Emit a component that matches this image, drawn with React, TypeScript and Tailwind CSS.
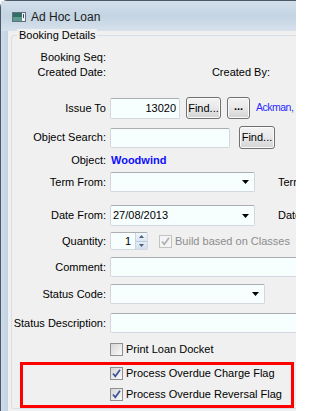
import type { ReactNode } from 'react';

function Check({ disabled = false, checked = true }: { disabled?: boolean; checked?: boolean }) {
  return (
    <span
      className={
        disabled
          ? 'w-[13px] h-[13px] shrink-0 border border-[#c3c3c3] bg-[#f4f4f4] flex items-center justify-center'
          : 'w-[13px] h-[13px] shrink-0 border border-[#8e8f8f] bg-gradient-to-br from-[#d6d6d6] to-[#fafafa] flex items-center justify-center'
      }
    >
      {checked && (
        <svg width="11" height="11" viewBox="0 0 11 11">
          <path
            d="M2 5.5 L4.3 8.3 L9 1.8"
            fill="none"
            stroke={disabled ? '#b0b0b0' : '#3d5196'}
            strokeWidth="1.7"
          />
        </svg>
      )}
    </span>
  );
}

function Row({
  label,
  className,
  children,
}: {
  label: string;
  className: string;
  children?: ReactNode;
}) {
  return (
    <div className={`flex items-center shrink-0 ${className}`}>
      <div className="w-[94px] shrink-0 text-right whitespace-nowrap">{label}</div>
      <div className="ml-[4px] flex items-center whitespace-nowrap">{children}</div>
    </div>
  );
}

function TextBox({ className, children }: { className: string; children?: ReactNode }) {
  return (
    <div
      className={`shrink-0 border border-[#d3d8de] border-t-[#abadb3] rounded-[2px] bg-[#f6fefe] flex items-center px-[3px] ${className}`}
    >
      {children}
    </div>
  );
}

function Combo({ className, value }: { className: string; value?: string }) {
  return (
    <div
      className={`shrink-0 h-[20px] border border-[#d3d8de] border-t-[#abadb3] rounded-[2px] bg-[#f6fefe] flex items-center justify-between pl-[2px] pr-[5px] ${className}`}
    >
      <span>{value}</span>
      <svg width="7" height="4" viewBox="0 0 7 4">
        <path d="M0 0 H7 L3.5 4 Z" fill="#000" />
      </svg>
    </div>
  );
}

function Button({ className, children }: { className: string; children: ReactNode }) {
  return (
    <div
      className={`shrink-0 rounded-[3px] border border-[#707070] bg-gradient-to-b from-[#f3f3f3] via-[#e8e8e8] to-[#d3d3d3] shadow-[inset_0_0_0_1px_#fbfbfb] flex items-center justify-center ${className}`}
    >
      {children}
    </div>
  );
}

export default function App() {
  return (
    <div className="w-[296px] h-[411px] overflow-hidden font-['Liberation_Sans',Arial,sans-serif] text-[11px] text-black">
      <div className="w-[460px] h-full flex flex-col rounded-tl-[7px] border-l border-t border-[#4a5868] bg-[#c9d8e7]">
        {/* title bar */}
        <div className="h-[30px] shrink-0 flex items-center pl-[11px] pt-[2px] bg-gradient-to-b from-[#d3dfeb] via-[#c4d4e2] to-[#d6e1ec]">
          <svg width="14" height="10" viewBox="0 0 14 10">
            <rect x="0.5" y="0.5" width="13" height="9" fill="#e8eef4" stroke="#5f6f7f" />
            <rect x="1" y="1" width="9" height="8" fill="#2f6f66" />
            <rect x="1" y="5" width="9" height="4" fill="#5b9a8c" />
            <rect x="10" y="1" width="3" height="8" fill="#f4f6f8" />
            <rect x="11" y="2" width="1" height="4" fill="#3a4a5a" />
          </svg>
          <span className="ml-[5px] text-[12px] text-[#1b1b1b]">Ad Hoc Loan</span>
        </div>

        <div className="flex-1 flex">
          <div className="w-[7px] shrink-0 bg-gradient-to-r from-[#cddbe9] to-[#c2d2e2]" />
          <div className="flex-1 bg-[#f0f0f0] pl-[3px] pt-[4px]">
            <div className="relative border border-[#d5dfe5] rounded-[3px] flex flex-col">
              <span className="absolute -top-[7px] left-[5px] px-[2px] bg-[#f0f0f0] leading-[13px]">
                Booking Details
              </span>

              <Row label="Booking Seq:" className="h-[15px] mt-[14px]" />
              <Row label="Created Date:" className="h-[15px]">
                <div className="ml-[100px] w-[60px] text-right">Created By:</div>
              </Row>

              <Row label="Issue To" className="h-[22px] mt-[17px]">
                <TextBox className="w-[70px] h-[21px] justify-end">13020</TextBox>
                <Button className="ml-[6px] w-[35px] h-[22px]">Find...</Button>
                <Button className="ml-[6px] w-[23px] h-[22px]">
                  <span className="font-bold -mt-[3px]">...</span>
                </Button>
                <span className="ml-[6px] text-[10.5px] tracking-[-0.5px] text-[#2a2aff]">Ackman,</span>
              </Row>

              <Row label="Object Search:" className="h-[23px] mt-[7px]">
                <TextBox className="w-[120px] h-[20px]" />
                <Button className="ml-[9px] w-[36px] h-[23px]">Find...</Button>
              </Row>

              <Row label="Object:" className="h-[20px] mt-[1px]">
                <span className="ml-[1px] font-bold text-[#0d0dff]">Woodwind</span>
              </Row>

              <Row label="Term From:" className="h-[20px] mt-[2px]">
                <Combo className="w-[145px]" />
                <span className="ml-[23px]">Term To:</span>
              </Row>

              <Row label="Date From:" className="h-[21px] mt-[13px]">
                <Combo className="w-[145px] h-[21px]" value="27/08/2013" />
                <span className="ml-[23px]">Date To:</span>
              </Row>

              <Row label="Quantity:" className="h-[18px] mt-[6px]">
                <div className="w-[38px] h-[18px] shrink-0 border border-[#d3d8de] border-t-[#abadb3] rounded-[2px] bg-[#f6fefe] flex">
                  <span className="flex-1 text-right pr-[4px] leading-[16px]">1</span>
                  <div className="w-[12px] flex flex-col border-l border-[#c8d3de]">
                    <div className="flex-1 flex items-center justify-center bg-gradient-to-b from-[#f2f7fc] to-[#d9e6f2] border-b border-[#b9c9d9]">
                      <svg width="5" height="3" viewBox="0 0 5 3">
                        <path d="M0 3 H5 L2.5 0 Z" fill="#4c6079" />
                      </svg>
                    </div>
                    <div className="flex-1 flex items-center justify-center bg-gradient-to-b from-[#e4edf6] to-[#cfdeee]">
                      <svg width="5" height="3" viewBox="0 0 5 3">
                        <path d="M0 0 H5 L2.5 3 Z" fill="#4c6079" />
                      </svg>
                    </div>
                  </div>
                </div>
                <span className="ml-[11px]">
                  <Check disabled />
                </span>
                <span className="ml-[3px] text-[#8d8d8d]">Build based on Classes</span>
              </Row>

              <Row label="Comment:" className="h-[20px] mt-[7px]">
                <TextBox className="w-[320px] h-[20px]" />
              </Row>

              <Row label="Status Code:" className="h-[20px] mt-[7px]">
                <Combo className="w-[155px]" />
              </Row>

              <Row label="Status Description:" className="h-[20px] mt-[9px]">
                <TextBox className="w-[320px] h-[20px]" />
              </Row>

              <Row label="" className="h-[16px] mt-[8px]">
                <Check checked={false} />
                <span className="ml-[3px]">Print Loan Docket</span>
              </Row>

              <div className="ml-[8px] mt-[5px] w-[274px] border-[3px] border-[#ff0000] pl-[87px] pt-0 pb-[3px] flex flex-col">
                <div className="h-[16px] flex items-center whitespace-nowrap">
                  <Check />
                  <span className="ml-[3px]">Process Overdue Charge Flag</span>
                </div>
                <div className="h-[16px] mt-[5px] flex items-center whitespace-nowrap">
                  <Check />
                  <span className="ml-[3px]">Process Overdue Reversal Flag</span>
                </div>
              </div>
            </div>
          </div>
        </div>
      </div>
    </div>
  );
}
